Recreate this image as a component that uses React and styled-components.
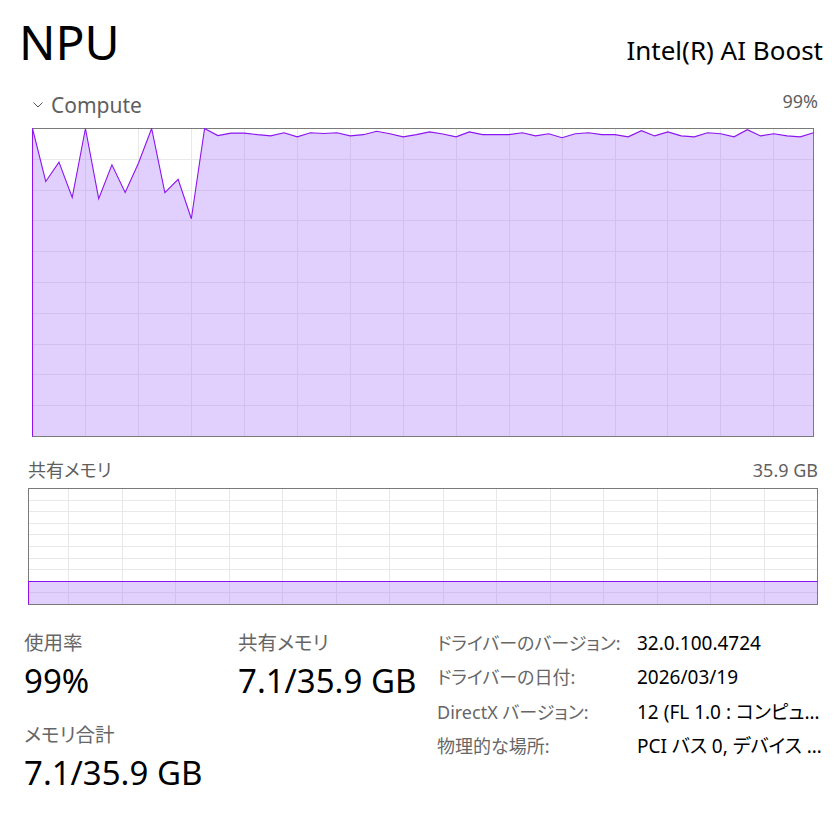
import React from 'react';
import styled, { createGlobalStyle } from 'styled-components';

const GlobalStyle = createGlobalStyle`
  html, body { margin: 0; padding: 0; background: #ffffff; }
  body {
    font-family: "Noto Sans", "Noto Sans CJK JP", sans-serif;
    font-feature-settings: "palt";
    color: #000;
  }
`;

const LINE = '#8b14f1';
const FILL = '#e1d0fd';
const GRID = '#e8e8e8';
const GRID_ON_FILL = '#d4bff1';
const FRAME = '#7a7a7a';

// last 60 seconds of NPU load, percent
const computeHistory = [
  100, 82.8, 89.1, 77.6, 100, 77.2, 88.2, 79.2, 88.7, 100,
  79.2, 83.5, 70.7, 100, 97.7, 98.5, 98.5, 98, 97.6, 98.6,
  97.3, 98.6, 98.4, 98.6, 97.6, 98, 99.1, 98.3, 97.3, 98,
  98.9, 98.2, 97.3, 98.9, 98, 98, 98, 98.6, 97.6, 98.3,
  97, 98.3, 98.6, 98, 98, 97.3, 99.3, 97.6, 98.9, 97.6,
  97.3, 98.6, 98.3, 97.3, 99.6, 97.6, 98.3, 97.6, 97.3, 98.6,
];

const sharedHistory = Array.from({ length: 60 }, () => 7.1);

const Page = styled.div`
  width: 840px;
  box-sizing: border-box;
  padding: 14px 17px 0 19px;
`;

const Header = styled.header`
  display: flex;
  justify-content: space-between;
  align-items: baseline;
  height: 56px;
`;

const Title = styled.h1`
  margin: 0;
  font-size: 48px;
  line-height: 56px;
  font-weight: 400;
`;

const Device = styled.div`
  font-size: 26px;
  line-height: 56px;
`;

const SectionHead = styled.div`
  display: flex;
  justify-content: space-between;
  align-items: baseline;
  margin-top: ${(p) => p.$top}px;
  padding: 0 5px 0 ${(p) => p.$inset}px;
  color: #5f5f5f;
  font-size: 18px;
  line-height: ${(p) => p.$lh}px;
`;

const HeadTitle = styled.div`
  display: flex;
  align-items: center;
  gap: 8px;
  font-size: ${(p) => p.$size}px;
`;

const Chevron = styled.svg`
  display: block;
  flex: none;
  margin-top: 1px;
`;

const ChartBox = styled.div`
  margin: ${(p) => p.$top}px ${(p) => p.$right}px 0 ${(p) => p.$left}px;
  line-height: 0;
  svg { display: block; }
`;

const Stats = styled.section`
  display: grid;
  grid-template-columns: 214px 199px 1fr;
  margin-top: 21px;
  padding-left: 5px;
`;

const StatColumn = styled.div`
  padding-top: 4px;
`;

const Stat = styled.div`
  & + & { margin-top: 21px; }
`;

const StatLabel = styled.div`
  font-size: 19.5px;
  line-height: 26px;
  color: #666;
`;

const StatValue = styled.div`
  margin-top: 5px;
  font-size: 33px;
  line-height: 40px;
  white-space: nowrap;
`;

const InfoTable = styled.dl`
  display: grid;
  grid-template-columns: 200px minmax(0, 1fr);
  grid-auto-rows: 34.5px;
  margin: 0;
  font-size: 19px;
  line-height: 34.5px;
`;

const InfoKey = styled.dt`
  color: #666;
  font-size: 18px;
  white-space: nowrap;
`;

const InfoVal = styled.dd`
  margin: 0;
  min-width: 0;
  white-space: nowrap;
  overflow: hidden;
  text-overflow: ellipsis;
`;

function AreaChart({ id, width, height, values, max, rows, colStart, colStep }) {
  const step = (width - 1) / (values.length - 1);
  const pts = values.map((v, i) => [
    0.5 + i * step,
    0.5 + (height - 1) * (1 - v / max),
  ]);
  const line = pts.map(([x, y]) => `${x.toFixed(2)},${y.toFixed(2)}`).join(' ');
  const area = `0.5,${height - 0.5} ${line} ${width - 0.5},${height - 0.5}`;

  const hLines = [];
  for (let i = 1; i < rows; i++) {
    hLines.push(Math.round((i * (height - 1)) / rows) + 0.5);
  }
  const vLines = [];
  for (let x = colStart; x < width - 1; x += colStep) vLines.push(Math.round(x) + 0.5);

  const grid = (color) => (
    <g stroke={color} strokeWidth="1">
      {hLines.map((y) => (
        <line key={`h${y}`} x1="0" x2={width} y1={y} y2={y} />
      ))}
      {vLines.map((x) => (
        <line key={`v${x}`} x1={x} x2={x} y1="0" y2={height} />
      ))}
    </g>
  );

  return (
    <svg width={width} height={height} viewBox={`0 0 ${width} ${height}`}>
      <defs>
        <clipPath id={`${id}-area`}>
          <polygon points={area} />
        </clipPath>
      </defs>
      {grid(GRID)}
      <polygon points={area} fill={FILL} />
      <g clipPath={`url(#${id}-area)`}>{grid(GRID_ON_FILL)}</g>
      <rect x="0.5" y="0.5" width={width - 1} height={height - 1} fill="none" stroke={FRAME} />
      <polyline
        points={`0.5,${height - 0.5} ${line}`}
        fill="none"
        stroke={LINE}
        strokeWidth="1.1"
        strokeLinejoin="miter"
      />
    </svg>
  );
}

const info = [
  ['ドライバーのバージョン:', '32.0.100.4724'],
  ['ドライバーの日付:', '2026/03/19'],
  ['DirectX バージョン:', '12 (FL 1.0 : コンピューティング)'],
  ['物理的な場所:', 'PCI バス 0, デバイス 11, 機能 0'],
];

export default function App() {
  return (
    <>
      <GlobalStyle />
      <Page>
        <Header>
          <Title>NPU</Title>
          <Device>Intel(R) AI Boost</Device>
        </Header>

        <SectionHead $top={19} $inset={14} $lh={24}>
          <HeadTitle $size={21}>
            <Chevron width="10" height="6" viewBox="0 0 10 6">
              <polyline points="0.5,0.5 5,5 9.5,0.5" fill="none" stroke="#555" strokeWidth="1" />
            </Chevron>
            Compute
          </HeadTitle>
          <span>99%</span>
        </SectionHead>
        <ChartBox $top={11} $left={13} $right={9}>
          <AreaChart
            id="compute"
            width={782}
            height={309}
            values={computeHistory}
            max={100}
            rows={10}
            colStart={53.3}
            colStep={52.92}
          />
        </ChartBox>

        <SectionHead $top={22} $inset={9} $lh={22}>
          <HeadTitle $size={18}>共有メモリ</HeadTitle>
          <span>35.9 GB</span>
        </SectionHead>
        <ChartBox $top={7} $left={9} $right={5}>
          <AreaChart
            id="shared"
            width={790}
            height={117}
            values={sharedHistory}
            max={35.9}
            rows={10}
            colStart={40}
            colStep={53.5}
          />
        </ChartBox>

        <Stats>
          <StatColumn>
            <Stat>
              <StatLabel>使用率</StatLabel>
              <StatValue>99%</StatValue>
            </Stat>
            <Stat>
              <StatLabel>メモリ合計</StatLabel>
              <StatValue>7.1/35.9 GB</StatValue>
            </Stat>
          </StatColumn>
          <StatColumn>
            <Stat>
              <StatLabel>共有メモリ</StatLabel>
              <StatValue>7.1/35.9 GB</StatValue>
            </Stat>
          </StatColumn>
          <InfoTable>
            {info.map(([k, v]) => (
              <React.Fragment key={k}>
                <InfoKey>{k}</InfoKey>
                <InfoVal>{v}</InfoVal>
              </React.Fragment>
            ))}
          </InfoTable>
        </Stats>
      </Page>
    </>
  );
}
